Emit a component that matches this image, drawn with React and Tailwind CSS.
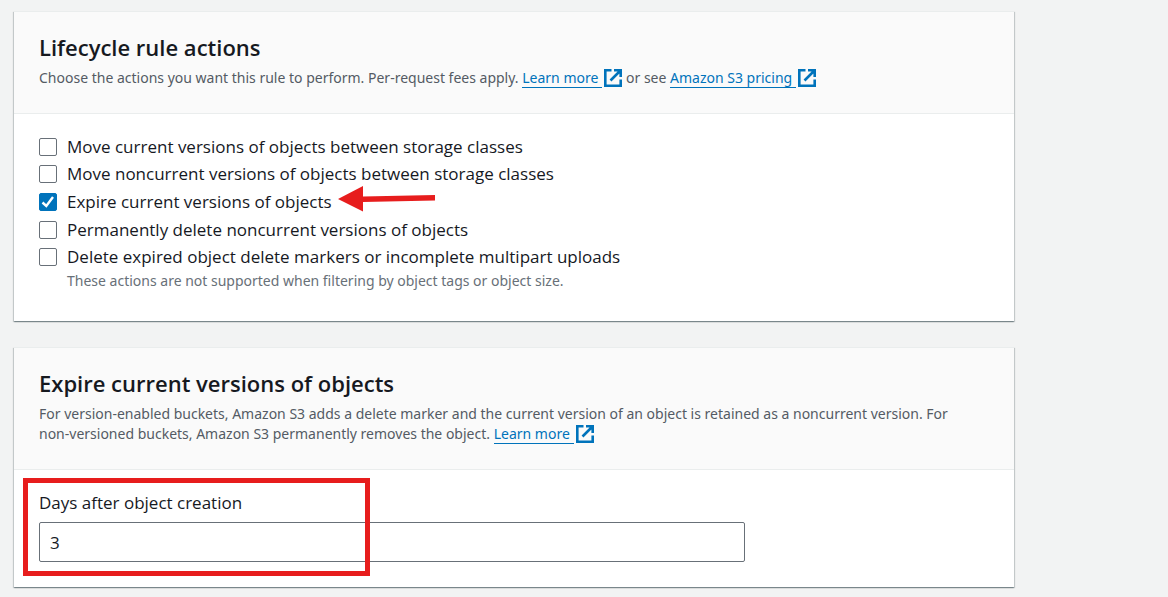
import React from "react";

function ExternalIcon() {
  return (
    <svg viewBox="0 0 18 18" className="ml-0.5 inline-block size-[18px] align-[-4px]" fill="none" stroke="#0073bb" aria-hidden="true">
      <path d="M7.500 1.300H1.300v15.400h15.400V10.500" strokeWidth="2.600" />
      <path d="M10 1.300h6.700V8M16.500 1.500 6.500 11.500" strokeWidth="2.600" />
    </svg>
  );
}

function ExternalLink({ href, children }) {
  return (
    <a href={href} className="whitespace-nowrap text-[#0073bb]">
      <span className="border-b border-[#0073bb] pr-1">{children}</span>
      <ExternalIcon />
    </a>
  );
}

function Card({ title, description, children }) {
  return (
    <section className="border-t border-[#eaeded] bg-white shadow-[0_1px_1px_0_rgba(0,28,36,0.3),1px_1px_1px_0_rgba(0,28,36,0.15),-1px_1px_1px_0_rgba(0,28,36,0.15)]">
      <header className="border-b border-[#eaeded] bg-[#fafafa] px-[25px] pt-[18px] pb-[25px]">
        <h2 className="text-[22px] leading-[34px] font-semibold text-[#16191f]">{title}</h2>
        <p className="mt-1 font-['Noto_Sans',sans-serif] text-sm leading-5 text-[#545b64]">{description}</p>
      </header>
      {children}
    </section>
  );
}

function Arrow() {
  return (
    <svg viewBox="0 0 98 26" className="pointer-events-none absolute -top-1 left-full ml-1.5 h-[26px] w-[98px]" aria-hidden="true">
      <path d="M0 13 25 0v10.500L97 9v5.500L25 16v9.500Z" fill="#e71d1d" />
    </svg>
  );
}

const actions = [
  { id: "move-current", label: "Move current versions of objects between storage classes" },
  { id: "move-noncurrent", label: "Move noncurrent versions of objects between storage classes" },
  { id: "expire-current", label: "Expire current versions of objects", checked: true, marked: true },
  { id: "delete-noncurrent", label: "Permanently delete noncurrent versions of objects" },
  { id: "delete-markers", label: "Delete expired object delete markers or incomplete multipart uploads", hint: "markers-hint" },
];

function ActionOption({ id, label, checked, marked, hint }) {
  return (
    <div className="flex items-center">
      <span className="grid size-[18px] shrink-0">
        <input
          id={id}
          type="checkbox"
          defaultChecked={checked}
          aria-describedby={hint}
          className="peer col-start-1 row-start-1 size-[18px] appearance-none rounded-xs border border-[#687078] bg-white checked:border-[#0073bb] checked:bg-[#0073bb]"
        />
        <svg viewBox="0 0 18 18" className="pointer-events-none invisible col-start-1 row-start-1 size-[18px] peer-checked:visible" fill="none" stroke="#fff" strokeWidth="2.4" aria-hidden="true">
          <path d="m3.500 9.500 3.800 3.500L14 4" />
        </svg>
      </span>
      <div className="relative ml-2.5">
        <label htmlFor={id} className="block text-[17px] leading-6 text-[#16191f]">{label}</label>
        {marked && <Arrow />}
      </div>
    </div>
  );
}

export default function App() {
  return (
    <main className="flex min-h-screen flex-col gap-[26px] bg-[#f2f3f3] pt-[11px] pr-[154px] pb-2.5 pl-3.5 font-['Open_Sans','Noto_Sans',sans-serif]">
      <Card
        title="Lifecycle rule actions"
        description={
          <>
            Choose the actions you want this rule to perform. Per-request fees apply.{" "}
            <ExternalLink href="#learn-actions">Learn more</ExternalLink> or see{" "}
            <ExternalLink href="#pricing">Amazon S3 pricing</ExternalLink>
          </>
        }
      >
        <div className="px-[25px] pt-[19px] pb-[30px]">
          <div className="grid h-[138px] grid-rows-5">
            {actions.map((action) => (
              <ActionOption key={action.id} {...action} />
            ))}
          </div>
          <p id="markers-hint" className="pl-7 font-['Noto_Sans',sans-serif] text-sm leading-5 text-[#687078]">
            These actions are not supported when filtering by object tags or object size.
          </p>
        </div>
      </Card>

      <Card
        title="Expire current versions of objects"
        description={
          <>
            For version-enabled buckets, Amazon S3 adds a delete marker and the current version of an object is retained as a noncurrent version. For{" "}
            <span className="whitespace-nowrap">non-versioned</span> buckets, Amazon S3 permanently removes the object.{" "}
            <ExternalLink href="#learn-expire">Learn more</ExternalLink>
          </>
        }
      >
        <div className="relative px-[25px] pt-[21px] pb-[25px]">
          <label htmlFor="days" className="block text-[17px] leading-6 text-[#16191f]">Days after object creation</label>
          <input
            id="days"
            type="text"
            inputMode="numeric"
            defaultValue="3"
            className="mt-[7px] block h-10 w-full max-w-[706px] rounded-xs border border-[#687078] bg-white px-2.5 text-[17px] text-[#16191f]"
          />
          <div className="pointer-events-none absolute top-2 left-[9px] h-[98px] w-[347px] border-5 border-[#e71d1d]" />
        </div>
      </Card>
    </main>
  );
}
